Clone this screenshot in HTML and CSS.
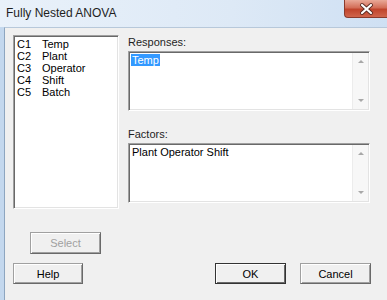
FILE: index.html
```html
<!DOCTYPE html>
<html lang="en">

<head>
  <meta charset="UTF-8">
  <meta name="viewport" content="width=device-width, initial-scale=1.0">
  <title>Fully Nested ANOVA</title>
  <link rel="stylesheet" href="styles.css">
</head>

<body>
  <div class="window">
    <div class="titlebar">
      <div class="title">Fully Nested ANOVA</div>
      <div class="close">
        <svg width="43" height="18" viewBox="0 0 43 18">
          <path d="M17 5 L26 13 M26 5 L17 13" stroke="#5a2a22" stroke-width="4" stroke-linecap="round" />
          <path d="M17 5 L26 13 M26 5 L17 13" stroke="#ffffff" stroke-width="2.2" stroke-linecap="round" />
        </svg>
      </div>
    </div>

    <div class="frame">
      <div class="client">
        <div class="main">
          <div class="varlist">
            <span>C1</span><span>Temp</span>
            <span>C2</span><span>Plant</span>
            <span>C3</span><span>Operator</span>
            <span>C4</span><span>Shift</span>
            <span>C5</span><span>Batch</span>
          </div>

          <div class="fields">
            <label class="field-label">Responses:</label>
            <div class="textbox">
              <div class="text"><span class="selected">Temp</span></div>
              <div class="scroll">
                <span class="arrow up"></span>
                <span class="arrow down"></span>
              </div>
            </div>

            <label class="field-label factors">Factors:</label>
            <div class="textbox">
              <div class="text">Plant Operator Shift</div>
              <div class="scroll">
                <span class="arrow up"></span>
                <span class="arrow down"></span>
              </div>
            </div>
          </div>
        </div>

        <div class="select-row">
          <button class="btn disabled">Select</button>
        </div>

        <div class="button-row">
          <button class="btn">Help</button>
          <button class="btn default ok">OK</button>
          <button class="btn cancel">Cancel</button>
        </div>
      </div>
    </div>
  </div>
</body>

</html>
```

FILE: styles.css
```css
body {
  margin: 0;
  padding: 0;
  width: 387px;
  height: 300px;
  overflow: hidden;
  font-family: "Liberation Sans", Arial, sans-serif;
  font-size: 11px;
  color: #000;
}

.window {
  display: flex;
  flex-direction: column;
  height: 300px;
  background-color: #c4d8ee;
}

.titlebar {
  height: 27px;
  display: flex;
  align-items: flex-start;
  background-image: linear-gradient(to right, #e9f1fa, #dde9f6 60%, #cfe0f3);
}

.title {
  padding-left: 6px;
  line-height: 26px;
  font-size: 12px;
  color: #1e1e1e;
}

.close {
  margin-left: auto;
  margin-right: 0;
  width: 43px;
  height: 18px;
  border: 1px solid #8a3a2c;
  border-top: none;
  border-right: none;
  border-radius: 0 0 0 4px;
  background-image: linear-gradient(#e9a998, #d36e58 45%, #c0442c 55%, #d0654c);
  box-sizing: border-box;
}

.close svg {
  display: block;
}

.frame {
  flex: 1;
  display: flex;
  padding-left: 4px;
}

.client {
  flex: 1;
  background-color: #f0f0f0;
  border-left: 1px solid #8ea6c0;
  border-top: 1px solid #b7c8da;
  padding: 7px 0 0 8px;
}

.main {
  display: flex;
  gap: 9px;
}

.varlist {
  width: 106px;
  height: 174px;
  box-sizing: border-box;
  background-color: #fff;
  border-top: 1px solid #a0a0a0;
  border-left: 1px solid #a0a0a0;
  border-right: 1px solid #fff;
  border-bottom: 1px solid #fff;
  box-shadow: inset 1px 1px 0 #696969, inset -1px -1px 0 #e3e3e3;
  padding: 2px 3px;
  display: grid;
  grid-template-columns: 25px auto;
  grid-auto-rows: 12px;
  line-height: 12px;
  align-content: start;
}

.fields {
  width: 242px;
  display: flex;
  flex-direction: column;
}

.field-label {
  height: 16px;
  line-height: 14px;
  color: #1e1e1e;
}

.factors {
  margin-top: 16px;
}

.textbox {
  height: 60px;
  box-sizing: border-box;
  display: flex;
  background-color: #fff;
  border-top: 1px solid #a0a0a0;
  border-left: 1px solid #a0a0a0;
  border-right: 1px solid #fff;
  border-bottom: 1px solid #fff;
  box-shadow: inset 1px 1px 0 #696969, inset -1px -1px 0 #e3e3e3;
}

.text {
  flex: 1;
  padding: 2px 3px 0 3px;
  line-height: 13px;
}

.selected {
  background-color: #3399ff;
  color: #fff;
  padding: 0 1px 0 1px;
  margin-left: -1px;
}

.scroll {
  width: 15px;
  margin: 1px 1px 1px 0;
  background-color: #f7f7f7;
  border-left: 1px solid #ececec;
  display: flex;
  flex-direction: column;
  justify-content: space-between;
  align-items: center;
  padding: 7px 0 7px 0;
}

.arrow {
  width: 0;
  height: 0;
  border-left: 3px solid transparent;
  border-right: 3px solid transparent;
}

.arrow.up {
  border-bottom: 3px solid #a8a8a8;
}

.arrow.down {
  border-top: 3px solid #a8a8a8;
}

.select-row {
  margin-top: 23px;
  padding-left: 17px;
}

.button-row {
  margin-top: 9px;
  display: flex;
}

.btn {
  font-family: "Liberation Sans", Arial, sans-serif;
  font-size: 11px;
  color: #000;
  width: 70px;
  height: 21px;
  padding: 0;
  background-color: #f0f0f0;
  border: 1px solid #a0a0a0;
  border-right-color: #696969;
  border-bottom-color: #696969;
  box-shadow: inset 1px 1px 0 #fff, inset -1px -1px 0 #a0a0a0;
}

.btn.disabled {
  width: 71px;
  height: 22px;
  color: #a0a0a0;
}

.btn.default {
  border: 1px solid #333;
  box-shadow: inset 1px 1px 0 #fff, inset -1px -1px 0 #696969;
}

.ok {
  width: 71px;
  margin-left: 132px;
}

.cancel {
  width: 71px;
  margin-left: 14px;
}
```
